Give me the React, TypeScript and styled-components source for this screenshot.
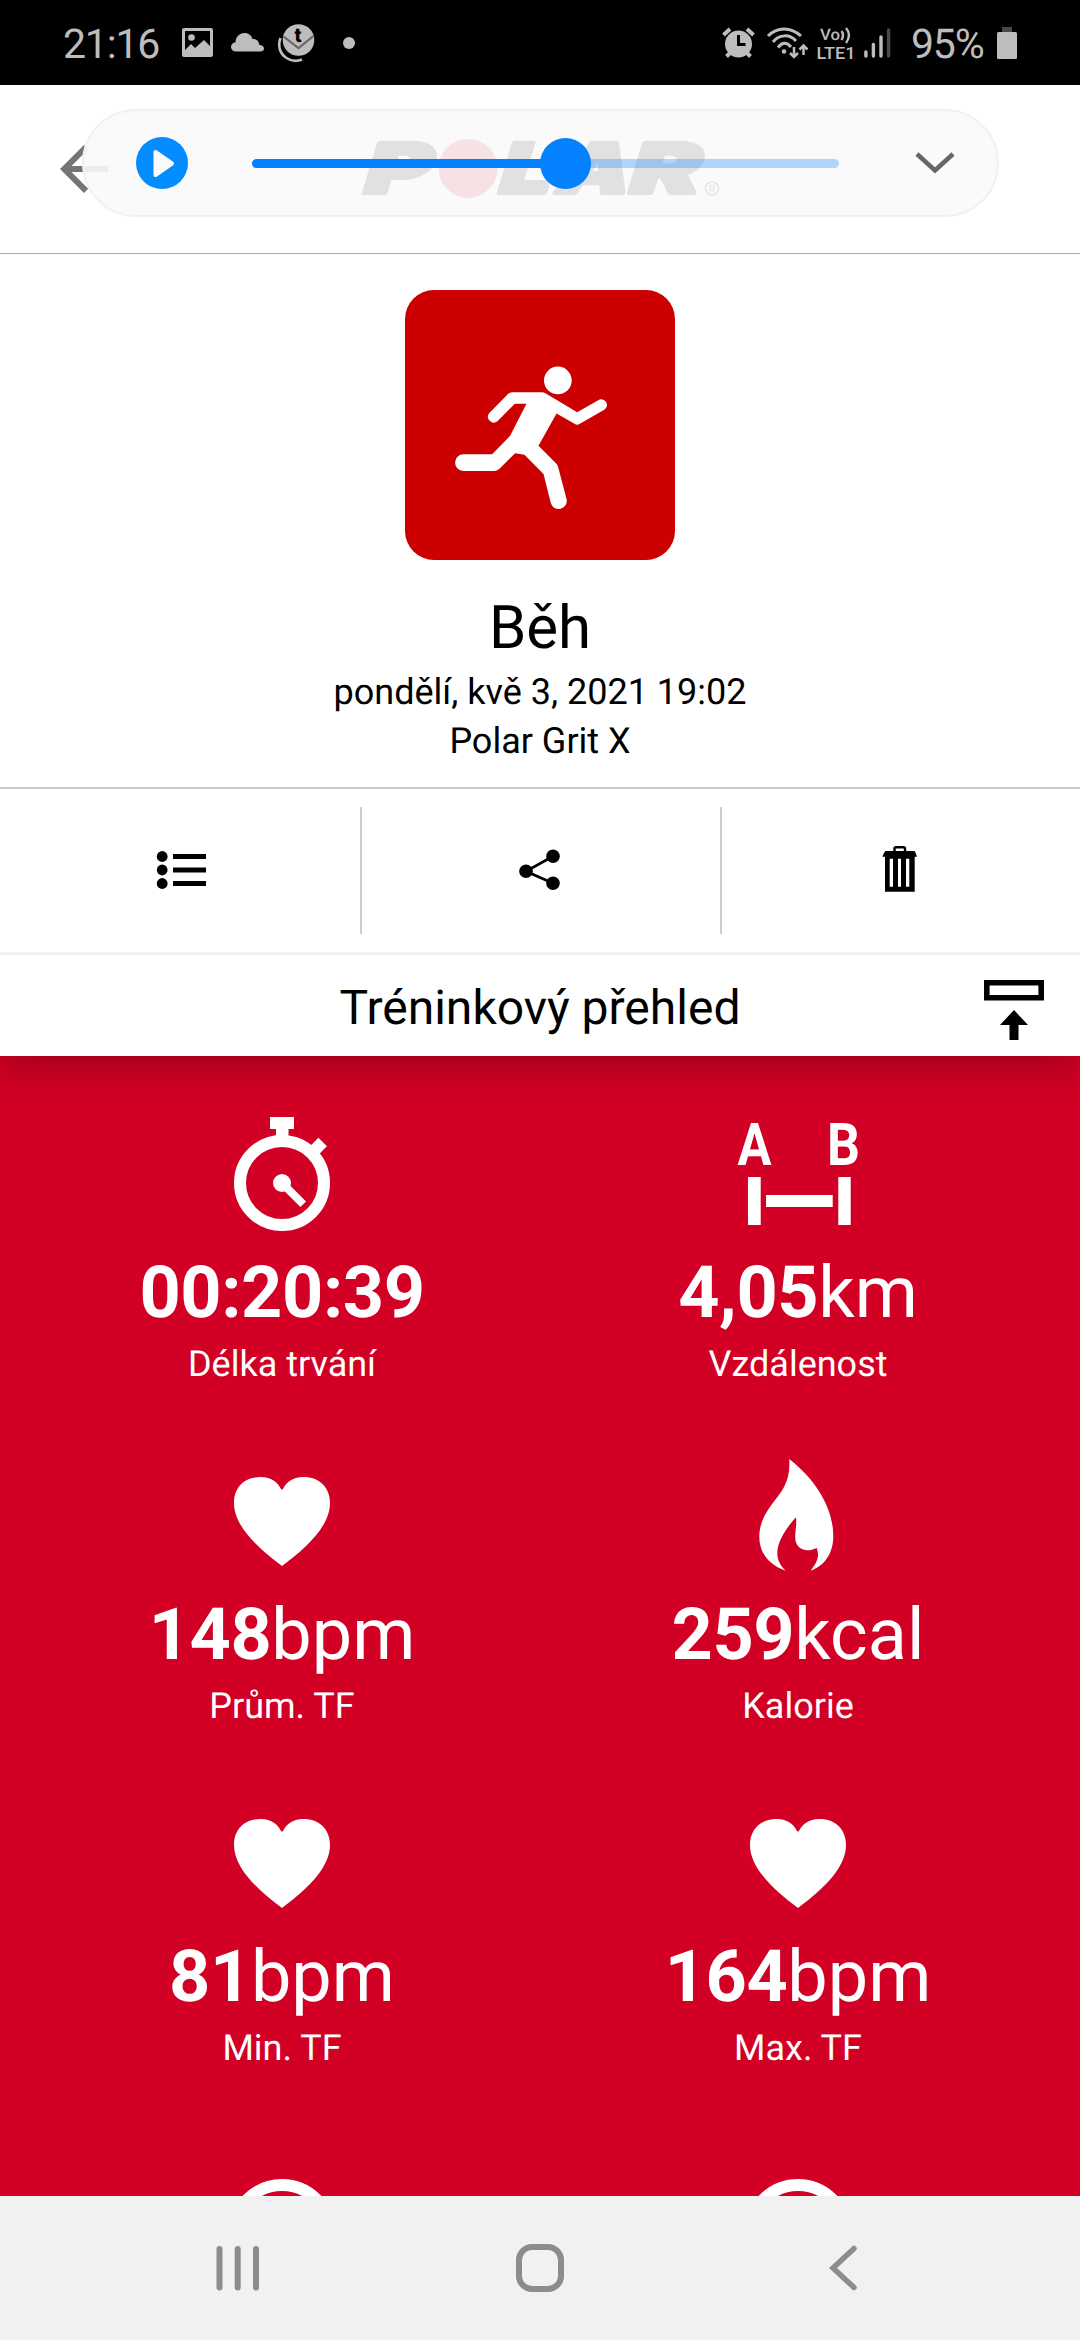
import React from "react";
import styled, { createGlobalStyle } from "styled-components";

const GlobalStyle = createGlobalStyle`
  * { box-sizing: border-box; }
  body {
    margin: 0;
    background: #fff;
    font-family: Roboto, "Noto Sans", sans-serif;
    text-rendering: geometricPrecision;
  }
  svg { display: block; flex: none; overflow: visible; }
`;

const Screen = styled.div`
  width: 1080px;
  height: 2340px;
  display: flex;
  flex-direction: column;
  overflow: hidden;
  background: #fff;
  color: #000;
`;

/* ---------- status bar ---------- */

const StatusBar = styled.header`
  flex: none;
  height: 85px;
  padding: 0 63px 0 63px;
  display: flex;
  align-items: center;
  justify-content: space-between;
  background: #000;
  color: #bdbdbd;
`;

const StatusGroup = styled.div<{ $gap: number }>`
  display: flex;
  align-items: center;
  gap: ${(p) => p.$gap}px;
`;

const StatusText = styled.span<{ $width: number }>`
  width: ${(p) => p.$width}px;
  font-size: 41px;
  line-height: 48px;
  padding-top: 4px;
  letter-spacing: -1.2px;
  white-space: nowrap;
`;

/* ---------- app header ---------- */

const AppHeader = styled.div`
  position: relative;
  flex: none;
  height: 169px;
  padding: 0 48px;
  display: grid;
  grid-template-columns: 72px 1fr 72px;
  align-items: center;
  justify-items: center;
  border-bottom: 1px solid #aaa;
`;

const PlayerPill = styled.div`
  position: absolute;
  left: 82px;
  top: 24px;
  width: 917px;
  height: 108px;
  padding: 0 42px 0 52px;
  display: flex;
  align-items: center;
  border: 2px solid #f1f1f1;
  border-radius: 54px;
  background: rgba(250, 250, 250, 0.9);
`;

const PlayButton = styled.button`
  width: 52px;
  height: 52px;
  padding: 0;
  border: 0;
  border-radius: 50%;
  background: #038cff;
`;

const Track = styled.div`
  width: 588px;
  height: 9px;
  margin-left: 64px;
  display: flex;
  align-items: center;
  border-radius: 5px;
  background: rgba(3, 129, 254, 0.3);
`;

const TrackFill = styled.div`
  width: 314px;
  height: 9px;
  border-radius: 5px;
  background: #0381fe;
`;

const Thumb = styled.div`
  flex: none;
  width: 51px;
  height: 51px;
  margin-left: -26px;
  border-radius: 50%;
  background: #0381fe;
`;

const Collapse = styled.div`
  margin-left: 76px;
`;

/* ---------- session summary ---------- */

const Summary = styled.section`
  flex: none;
  height: 535px;
  padding-top: 36px;
  display: flex;
  flex-direction: column;
  align-items: center;
  border-bottom: 2px solid #ccc;
`;

const SportBadge = styled.div`
  width: 270px;
  height: 270px;
  border-radius: 29px;
  background: #c00;
`;

const SportName = styled.h1`
  margin: 33px 0 5px;
  font-size: 60px;
  line-height: 70px;
  font-weight: 400;
`;

const SummaryLine = styled.p`
  margin: 0;
  font-size: 36px;
  line-height: 49px;
`;

/* ---------- action row ---------- */

const Actions = styled.nav`
  flex: none;
  height: 166px;
  display: grid;
  grid-template-columns: 360px 2px 358px 2px 358px;
  border-bottom: 3px solid #f0f0f0;
`;

const ActionButton = styled.button`
  border: 0;
  padding: 51px 0 0;
  background: none;
  display: flex;
  align-items: flex-start;
  justify-content: center;
`;

const Divider = styled.div`
  margin: 18px 0;
  background: #ccc;
`;

/* ---------- section heading ---------- */

const SectionBar = styled.div`
  position: relative;
  z-index: 1;
  flex: none;
  height: 101px;
  padding: 4px 34px 0;
  display: grid;
  grid-template-columns: 64px 1fr 64px;
  align-items: center;
  background: #fff;
  box-shadow: 0 12px 36px rgba(0, 0, 0, 0.22);
  clip-path: inset(0 0 -60px 0);
`;

const SectionTitle = styled.h2`
  grid-column: 2;
  margin: 0;
  text-align: center;
  font-size: 48px;
  line-height: 97px;
  font-weight: 400;
`;

/* ---------- metrics ---------- */

const Metrics = styled.main`
  flex: none;
  height: 1140px;
  padding: 58px 24px 0;
  display: grid;
  grid-template-columns: 1fr 1fr;
  grid-auto-rows: 342px;
  overflow: hidden;
  background: #d10024;
  color: #fff;
`;

const MetricCell = styled.div`
  display: flex;
  flex-direction: column;
  align-items: center;
`;

const MetricValue = styled.div`
  margin-top: 17px;
  font-size: 72px;
  line-height: 84px;
  white-space: nowrap;
`;

const MetricNumber = styled.span`
  font-weight: 700;
  letter-spacing: -0.4px;
`;

const MetricLabel = styled.div`
  margin-top: 7px;
  font-size: 36px;
  line-height: 44px;
`;

/* ---------- system navigation ---------- */

const NavBar = styled.footer`
  flex: none;
  height: 144px;
  padding: 0 86px;
  display: grid;
  grid-template-columns: repeat(3, 1fr);
  align-items: center;
  justify-items: center;
  background: #f1f1f1;
`;

/* ---------- icons ---------- */

const GalleryIcon = () => (
  <svg width="31" height="29" viewBox="0 0 31 29">
    <path
      fill="#bdbdbd"
      fillRule="evenodd"
      d="M2 0H29Q31 0 31 2V27Q31 29 29 29H2Q0 29 0 27V2Q0 0 2 0ZM3 3V22L9 16L13 20L22 12L28 18V3Z"
    />
    <circle cx="9.5" cy="9.5" r="3.3" fill="#bdbdbd" />
  </svg>
);

const CloudIcon = () => (
  <svg width="33" height="19" viewBox="0 0 33 19">
    <path
      fill="#bdbdbd"
      d="M5 18.5C2 18.5 0 16.5 0 14C0 11.5 2 9.5 4.5 9.3C4.5 4 8.5 0 13.5 0C17.5 0 20.5 2.5 21.5 6C25 5.5 28 8 28.3 11.8C31 12 33 13.5 33 15.5C33 17.5 31.5 18.5 29.5 18.5Z"
    />
  </svg>
);

const MailBadgeIcon = () => (
  <svg width="37" height="38" viewBox="0 0 37 38">
    <path
      d="M2.5 14C-0.5 22 2 30 8.5 34C13 37 19 37.5 24 35.5"
      fill="none"
      stroke="#bdbdbd"
      strokeWidth="2.6"
    />
    <circle cx="20.5" cy="16" r="15.8" fill="#bdbdbd" />
    <path d="M5.5 12.5L20.5 24L35.5 12" fill="none" stroke="#666" strokeWidth="2.2" />
    <text x="20" y="17.5" textAnchor="middle" fontSize="20" fontWeight="900" fill="#000">
      t
    </text>
  </svg>
);

const DotIcon = () => (
  <svg width="12" height="12" viewBox="0 0 12 12">
    <circle cx="6" cy="6" r="6" fill="#bdbdbd" />
  </svg>
);

const AlarmIcon = () => (
  <svg width="33" height="31" viewBox="0 0 33 31">
    <g stroke="#bdbdbd" strokeWidth="4" fill="none">
      <path d="M1.5 8L8 2M31.5 8L25 2M4.5 29.5L9 25M28.5 29.5L24 25" />
    </g>
    <circle cx="16.5" cy="17" r="13.5" fill="#bdbdbd" />
    <path d="M16.5 8V17.5H23.5" fill="none" stroke="#000" strokeWidth="3" />
  </svg>
);

const WifiIcon = () => (
  <svg width="41" height="31" viewBox="0 0 41 31">
    <g fill="none" stroke="#bdbdbd" strokeWidth="3">
      <path d="M1 9C10 -0.5 24 -0.5 34 9M6 15C12 7 23 7 29 14M11 20.5C15 15 20 15 24 20" />
      <path
        d="M27 20V29.5M23 26L27 30L31 26M36.5 28V18.5M32.5 22.5L36.5 18.5L40.5 22.5"
        strokeWidth="2.5"
      />
    </g>
    <circle cx="17" cy="24.5" r="2.3" fill="#bdbdbd" />
  </svg>
);

const VolteIcon = () => (
  <svg width="38" height="32" viewBox="0 0 38 32">
    <g fill="#bdbdbd" fontWeight="500">
      <text x="3" y="13" fontSize="16" textLength="20" lengthAdjust="spacingAndGlyphs">
        Vo
      </text>
      <text x="-0.5" y="31.5" fontSize="17" textLength="39" lengthAdjust="spacingAndGlyphs">
        LTE1
      </text>
    </g>
    <path
      d="M24.5 4Q27.5 8 24.5 13M29 1Q35 8 29 16"
      fill="none"
      stroke="#bdbdbd"
      strokeWidth="2.4"
    />
  </svg>
);

const SignalIcon = () => (
  <svg width="27" height="30" viewBox="0 0 27 30">
    <g stroke="#bdbdbd" strokeWidth="3.4" strokeLinecap="round">
      <path d="M1.9 24V28M9.4 16.5V28M17 9V28" />
      <path d="M24.6 2V28" stroke="#4a4a4a" />
    </g>
  </svg>
);

const BatteryIcon = () => (
  <svg width="20" height="32" viewBox="0 0 20 32">
    <path d="M5 0H15V6H5Z" fill="#4a4a4a" />
    <rect y="5" width="20" height="27" rx="1.5" fill="#bdbdbd" />
  </svg>
);

const BackArrowIcon = () => (
  <svg width="72" height="72" viewBox="0 0 24 24">
    <path fill="#757575" d="M20 11H7.83l5.59-5.59L12 4l-8 8 8 8 1.41-1.41L7.83 13H20v-2z" />
  </svg>
);

const PolarLogo = () => (
  <svg width="356" height="58" viewBox="0 0 356 58">
    <g
      transform="translate(0 56) skewX(-17)"
      fontFamily="Inter, Roboto, sans-serif"
      fontWeight="900"
      fontSize="69"
      stroke="#000"
      strokeWidth="4"
      strokeLinejoin="round"
    >
      <text x="-3" y="-3" textLength="66" lengthAdjust="spacingAndGlyphs">P</text>
      <text x="132" y="-3" textLength="52" lengthAdjust="spacingAndGlyphs">L</text>
      <text x="190" y="-3" textLength="72" lengthAdjust="spacingAndGlyphs">A</text>
      <text x="262" y="-3" textLength="70" lengthAdjust="spacingAndGlyphs">R</text>
    </g>
    <circle cx="106" cy="28.5" r="29.5" fill="#d10024" />
    <circle cx="350" cy="48.5" r="6.5" fill="none" stroke="#000" strokeWidth="1.2" />
    <text x="350" y="52.5" textAnchor="middle" fontSize="11">R</text>
  </svg>
);

const PlayIcon = () => (
  <svg width="52" height="52" viewBox="0 0 52 52">
    <path
      d="M19.5 15L36 26.5L19.5 38Z"
      fill="#fafafa"
      stroke="#fafafa"
      strokeWidth="4"
      strokeLinejoin="round"
    />
  </svg>
);

const ChevronDownIcon = () => (
  <svg width="40" height="22" viewBox="0 0 40 22">
    <path d="M2 2L20 18.5L38 2" fill="none" stroke="#666" strokeWidth="4.5" />
  </svg>
);

const RunnerIcon = () => (
  <svg width="270" height="270" viewBox="76 60 809 809">
    <g fill="#fff">
      <circle cx="534" cy="331" r="41.5" />
      <path d="M397 366H485Q492 366 498 370L592 426L655 390A17 17 0 0 1 673 419L600 461Q592 466 584 461L530 430L476 527L529 580Q533 584 535 591L560 686A24 24 0 0 1 513 698L491 611L434 554L406 549L360 595Q353 602 344 602H251A25 25 0 0 1 251 552H337L391 497L440 401H405L353 453A17.5 17.5 0 0 1 328 429L384 372Q390 366 397 366Z" />
    </g>
  </svg>
);

const ListIcon = () => (
  <svg width="60" height="60" viewBox="0 0 60 60">
    {[16.5, 30, 43.5].map((y) => (
      <g key={y}>
        <circle cx="12.2" cy={y} r="5.4" />
        <rect x="23" y={y - 2.5} width="33" height="5" />
      </g>
    ))}
  </svg>
);

const ShareIcon = () => (
  <svg width="60" height="60" viewBox="0 0 60 60">
    <path d="M42 16.3L15 31.3L42 43.3" fill="none" stroke="#000" strokeWidth="2.7" />
    <circle cx="42" cy="16.3" r="6.8" />
    <circle cx="15" cy="31.3" r="6.8" />
    <circle cx="42" cy="43.3" r="6.8" />
  </svg>
);

const TrashIcon = () => (
  <svg width="60" height="60" viewBox="0 0 60 60">
    <path
      d="M23.5 12V8.5Q23.5 7.2 24.8 7.2H32.7Q34 7.2 34 8.5V12"
      fill="none"
      stroke="#000"
      strokeWidth="2.4"
    />
    <path
      fillRule="evenodd"
      d="M14.5 11H43.5Q45 13 46 16.7H43.7V51.7H14V16.7H11.3Q12.5 13 14.5 11ZM18.7 18.7V46.7H22V18.7ZM27 18.7V46.7H30V18.7ZM35 18.7V46.7H38.3V18.7Z"
    />
  </svg>
);

const MoveTopIcon = () => (
  <svg width="64" height="64" viewBox="0 0 64 64">
    <path d="M4.8 6.8H59.2V21.8H4.8Z" fill="none" stroke="#000" strokeWidth="5.6" />
    <path d="M32 34L46 49H36.5V64H27.5V49H18Z" />
  </svg>
);

const StopwatchIcon = () => (
  <svg width="120" height="120" viewBox="0 0 120 120">
    <g fill="none" stroke="#fff">
      <circle cx="60" cy="69" r="42" strokeWidth="12" />
      <path d="M100.7 28L89 39.7" strokeWidth="12" />
      <path d="M60 69L81.2 90.3" strokeWidth="8" />
    </g>
    <path fill="#fff" d="M48 3H72V15H66.5V24H54V15H48Z" />
    <circle cx="60" cy="69" r="9" fill="#fff" />
  </svg>
);

const DistanceIcon = () => (
  <svg width="120" height="120" viewBox="0 0 120 120">
    <g fill="#fff">
      <text
        x="-0.5"
        y="51"
        fontSize="59"
        fontWeight="700"
        textLength="34"
        lengthAdjust="spacingAndGlyphs"
      >
        A
      </text>
      <text
        x="89"
        y="51"
        fontSize="59"
        fontWeight="700"
        textLength="33"
        lengthAdjust="spacingAndGlyphs"
      >
        B
      </text>
      <path d="M10 63H22.7V111H10ZM100.3 63H112.7V111H100.3ZM28 81H94.7V93H28Z" />
    </g>
  </svg>
);

const HeartIcon = () => (
  <svg width="120" height="120" viewBox="0 0 120 120">
    <path
      fill="#fff"
      d="M60 110C40 95 12 72 12 47C12 31 23 21 38.5 21C50 21 56 27 59 33Q60 34 61 33C64 27 70 21 81.5 21C97 21 108 31 108 47C108 72 80 95 60 110Z"
    />
  </svg>
);

const FlameIcon = () => (
  <svg width="120" height="120" viewBox="0 0 120 120">
    <path
      fill="#fff"
      d="M51.3 3C78 24 95.3 52 95.3 80C95.3 98 86 110 72.7 114.7C81 104 81 99 78.7 92C74 94 72 94.5 70 94.3C62 94.3 57.3 89 57.3 82C57 74 59 70 58 61.3C50 70 39.3 84 39.3 97.3C39.3 104 43 111 47.7 114.7C31 109 21.3 97 21.3 80.7C21.3 58 38 46 46 31C51 21 51.5 14 51.3 3Z"
    />
  </svg>
);

const RingIcon = () => (
  <svg width="120" height="120" viewBox="0 0 120 120">
    <circle cx="60" cy="93" r="48" fill="none" stroke="#fff" strokeWidth="12" />
  </svg>
);

const RecentsIcon = () => (
  <svg width="48" height="48" viewBox="0 0 48 48">
    <path
      d="M6.5 5V43.5M24.7 5V43.5M43 5V43.5"
      stroke="#8c8c8c"
      strokeWidth="6"
      strokeLinecap="round"
    />
  </svg>
);

const HomeIcon = () => (
  <svg width="48" height="48" viewBox="0 0 48 48">
    <rect x="3" y="3" width="42" height="42" rx="13" fill="none" stroke="#8c8c8c" strokeWidth="6" />
  </svg>
);

const BackIcon = () => (
  <svg width="48" height="48" viewBox="0 0 48 48">
    <path
      d="M35 4.5L14 24L35 43.5"
      fill="none"
      stroke="#8c8c8c"
      strokeWidth="5.5"
      strokeLinecap="round"
    />
  </svg>
);

/* ---------- data ---------- */

type Metric = {
  Icon: React.FC;
  value: string;
  unit?: string;
  label: string;
};

const metrics: Metric[] = [
  { Icon: StopwatchIcon, value: "00:20:39", label: "Délka trvání" },
  { Icon: DistanceIcon, value: "4,05", unit: "km", label: "Vzdálenost" },
  { Icon: HeartIcon, value: "148", unit: "bpm", label: "Prům. TF" },
  { Icon: FlameIcon, value: "259", unit: "kcal", label: "Kalorie" },
  { Icon: HeartIcon, value: "81", unit: "bpm", label: "Min. TF" },
  { Icon: HeartIcon, value: "164", unit: "bpm", label: "Max. TF" },
];

export default function App() {
  return (
    <Screen>
      <GlobalStyle />
      <StatusBar>
        <StatusGroup $gap={18}>
          <StatusText $width={101}>21:16</StatusText>
          <GalleryIcon />
          <StatusGroup $gap={14}>
            <CloudIcon />
            <StatusGroup $gap={28}>
              <MailBadgeIcon />
              <DotIcon />
            </StatusGroup>
          </StatusGroup>
        </StatusGroup>
        <StatusGroup $gap={20}>
          <StatusGroup $gap={9}>
            <StatusGroup $gap={12}>
              <AlarmIcon />
              <WifiIcon />
            </StatusGroup>
            <VolteIcon />
            <SignalIcon />
          </StatusGroup>
          <StatusGroup $gap={10}>
            <StatusText $width={76}>95%</StatusText>
            <BatteryIcon />
          </StatusGroup>
        </StatusGroup>
      </StatusBar>

      <AppHeader>
        <BackArrowIcon />
        <PolarLogo />
        <PlayerPill>
          <PlayButton aria-label="Play">
            <PlayIcon />
          </PlayButton>
          <Track>
            <TrackFill />
            <Thumb />
          </Track>
          <Collapse>
            <ChevronDownIcon />
          </Collapse>
        </PlayerPill>
      </AppHeader>

      <Summary>
        <SportBadge>
          <RunnerIcon />
        </SportBadge>
        <SportName>Běh</SportName>
        <SummaryLine>pondělí, kvě 3, 2021 19:02</SummaryLine>
        <SummaryLine>Polar Grit X</SummaryLine>
      </Summary>

      <Actions>
        <ActionButton>
          <ListIcon />
        </ActionButton>
        <Divider />
        <ActionButton>
          <ShareIcon />
        </ActionButton>
        <Divider />
        <ActionButton>
          <TrashIcon />
        </ActionButton>
      </Actions>

      <SectionBar>
        <SectionTitle>Tréninkový přehled</SectionTitle>
        <MoveTopIcon />
      </SectionBar>

      <Metrics>
        {metrics.map(({ Icon, value, unit, label }) => (
          <MetricCell key={label}>
            <Icon />
            <MetricValue>
              <MetricNumber>{value}</MetricNumber>
              {unit}
            </MetricValue>
            <MetricLabel>{label}</MetricLabel>
          </MetricCell>
        ))}
        <MetricCell>
          <RingIcon />
        </MetricCell>
        <MetricCell>
          <RingIcon />
        </MetricCell>
      </Metrics>

      <NavBar>
        <RecentsIcon />
        <HomeIcon />
        <BackIcon />
      </NavBar>
    </Screen>
  );
}
